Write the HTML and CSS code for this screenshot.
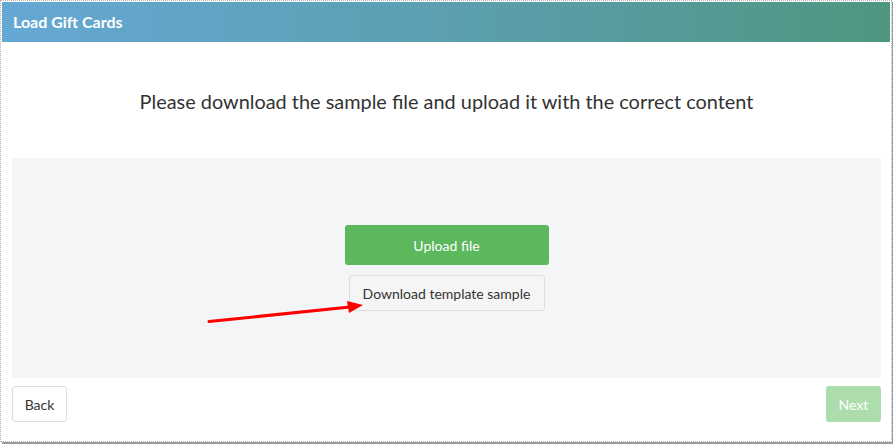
FILE: index.html
```html
<!DOCTYPE html>
<html>
<head>
<meta charset="utf-8">
<link rel="stylesheet" href="styles.css">
</head>
<body>
<div class="frame">
  <div class="header">Load Gift Cards</div>
  <div class="content">
    <h2 class="lead">Please download the sample file and upload it with the correct content</h2>
    <div class="panel">
      <button class="btn-upload">Upload file</button>
      <button class="btn-download">Download template sample</button>
    </div>
    <div class="footer">
      <button class="btn-back">Back</button>
      <button class="btn-next">Next</button>
    </div>
  </div>
  <svg class="arrow" width="893" height="445" viewBox="0 0 893 445">
    <line x1="209" y1="321.5" x2="350" y2="307" stroke="#f00" stroke-width="3" stroke-linecap="round"/>
    <polygon points="363,305 347,301 349,313" fill="#f00"/>
  </svg>
</div>
</body>
</html>
```
FILE: styles.css
```css
* { box-sizing: border-box; }
html, body { margin: 0; padding: 0; background: #fff; }
body { font-family: "Lato", "Open Sans", sans-serif; color: #333; width: 893px; height: 445px; overflow: hidden; }
.frame {
  width: 892px;
  height: 442px;
  border: 1px dotted #b5b5b5;
  padding: 1px;
  box-shadow: 2px 2px 0 #9a9a9a;
  background: #fff;
  display: flex;
  flex-direction: column;
}
.header {
  height: 40px;
  flex: none;
  background: linear-gradient(90deg, #65a8d4 0%, #5b9fb0 50%, #4f9680 100%);
  color: #fff;
  font-weight: 700;
  font-size: 16px;
  line-height: 40px;
  padding-left: 11px;
}
.content {
  flex: 1;
  display: flex;
  flex-direction: column;
  padding: 0 9px 0 10px;
}
.lead {
  margin: 0;
  height: 116px;
  padding-top: 48px;
  text-align: center;
  font-weight: 400;
  font-size: 19.9px;
  line-height: 22px;
  color: #333;
}
.panel {
  height: 220px;
  background: #f4f5f7;
  display: flex;
  flex-direction: column;
  align-items: center;
  padding-top: 67px;
}
button { font-family: inherit; cursor: pointer; }
.btn-upload {
  width: 204px;
  height: 40px;
  background: #5cb85c;
  border: none;
  border-radius: 3px;
  color: #fff;
  font-size: 14px;
}
.btn-download {
  margin-top: 10px;
  width: 196px;
  height: 36px;
  background: #f5f5f5;
  border: 1px solid #ddd;
  border-radius: 3px;
  color: #333;
  font-size: 14px;
}
.footer {
  display: flex;
  justify-content: space-between;
  margin-top: 8px;
}
.btn-back {
  width: 55px;
  height: 36px;
  background: #fff;
  border: 1px solid #ddd;
  border-radius: 3px;
  color: #333;
  font-size: 14px;
}
.btn-next {
  width: 55px;
  height: 36px;
  background: #addcad;
  border: none;
  border-radius: 3px;
  color: #fff;
  font-size: 14px;
}
.arrow { position: absolute; left: 0; top: 0; pointer-events: none; }
```
